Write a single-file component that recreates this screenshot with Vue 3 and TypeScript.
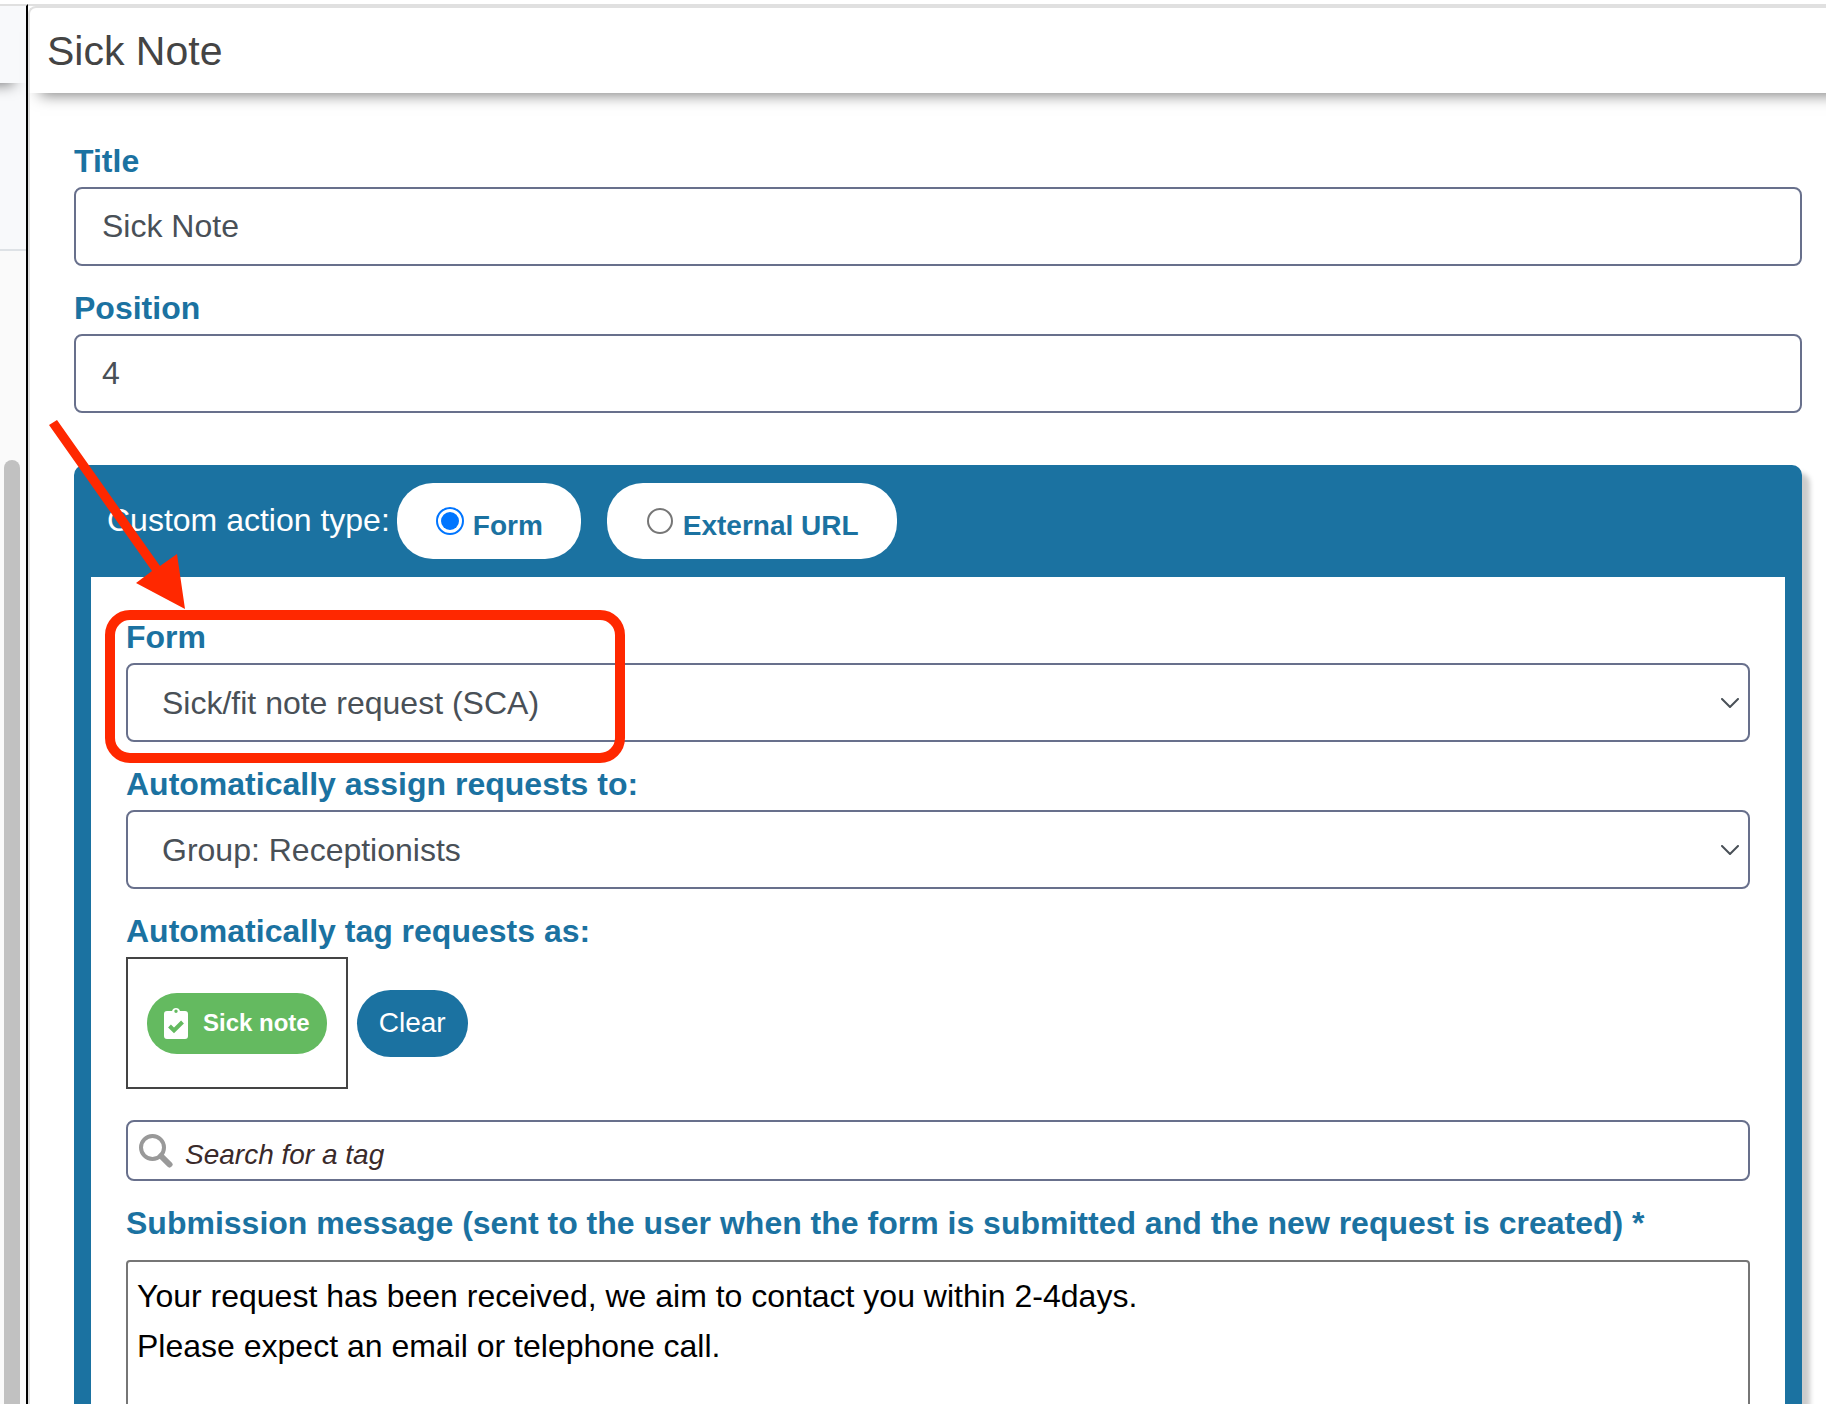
<script setup lang="ts">
import { ref } from 'vue'

const title = ref('Sick Note')
const position = ref('4')
const actionType = ref<'form' | 'url'>('form')
const form = ref('sca')
const assignee = ref('receptionists')
const tagSearch = ref('')
const message = ref(
  'Your request has been received, we aim to contact you within 2-4days.\nPlease expect an email or telephone call.'
)
</script>

<template>
  <div class="page">
    <aside class="side">
      <div class="side-head"></div>
      <div class="side-body"></div>
      <div class="side-list"><div class="thumb"></div></div>
    </aside>

    <main class="sheet">
      <header class="sheet-head"><h1>Sick Note</h1></header>

      <form class="content" @submit.prevent>
        <div class="field">
          <label for="title">Title</label>
          <input id="title" v-model="title" class="control" type="text" />
        </div>
        <div class="field">
          <label for="position">Position</label>
          <input id="position" v-model="position" class="control" type="text" />
        </div>

        <section class="panel">
          <div class="panel-head" role="radiogroup" aria-labelledby="type-label">
            <span id="type-label" class="type-label">Custom action type:</span>
            <label class="pill">
              <input v-model="actionType" type="radio" name="type" value="form" />
              <span>Form</span>
            </label>
            <label class="pill">
              <input v-model="actionType" type="radio" name="type" value="url" />
              <span>External URL</span>
            </label>
          </div>

          <div class="panel-body">
            <div class="field marked">
              <label for="form">Form</label>
              <div class="select">
                <select id="form" v-model="form" class="control">
                  <option value="sca">Sick/fit note request (SCA)</option>
                </select>
                <svg class="chevron" viewBox="0 0 18 10" aria-hidden="true"><path d="M1 1l8 8 8-8" /></svg>
              </div>
              <div class="highlight"></div>
              <svg class="arrow" viewBox="0 0 138 190" aria-hidden="true">
                <path d="M9 0L112 146L129 134L137 189L88 163L104 151L1 5Z" />
              </svg>
            </div>

            <div class="field">
              <label for="assignee">Automatically assign requests to:</label>
              <div class="select">
                <select id="assignee" v-model="assignee" class="control">
                  <option value="receptionists">Group: Receptionists</option>
                </select>
                <svg class="chevron" viewBox="0 0 18 10" aria-hidden="true"><path d="M1 1l8 8 8-8" /></svg>
              </div>
            </div>

            <div class="field">
              <label for="tag-search">Automatically tag requests as:</label>
              <div class="tag-row">
                <div class="tag-box">
                  <span class="tag">
                    <svg class="clipboard" viewBox="0 0 24 32" aria-hidden="true">
                      <path
                        fill-rule="evenodd"
                        d="M3 4H8A4.200 4.200 0 0 1 16 4H21A3 3 0 0 1 24 7V29A3 3 0 0 1 21 32H3A3 3 0 0 1 0 29V7A3 3 0 0 1 3 4ZM12 2.500A1.700 1.700 0 1 0 12 5.900A1.700 1.700 0 1 0 12 2.500Z"
                      />
                      <path class="tick" d="M5.500 19l4.500 4.500 8.500-8.500" />
                    </svg>
                    Sick note
                  </span>
                </div>
                <button type="button" class="clear">Clear</button>
              </div>
              <div class="search">
                <svg class="lens" viewBox="0 0 34 34" aria-hidden="true">
                  <circle cx="13.500" cy="13.500" r="11.500" />
                  <path d="M22 22l8.500 8.500" />
                </svg>
                <input id="tag-search" v-model="tagSearch" type="text" placeholder="Search for a tag" />
              </div>
            </div>

            <div class="field message">
              <label for="message"
                >Submission message (sent to the user when the form is submitted and the new request is created) *</label
              >
              <textarea id="message" v-model="message" rows="6"></textarea>
            </div>
          </div>
        </section>
      </form>
    </main>
  </div>
</template>

<style>
body {
  margin: 0;
  background: #fff;
}
</style>

<style scoped>
* {
  box-sizing: border-box;
}
.page {
  display: flex;
  height: 100vh;
  overflow: hidden;
  padding-top: 4px;
  font-family: 'Liberation Sans', Arial, sans-serif;
  font-size: 32px;
  line-height: 36px;
  color: #495057;
}
.side {
  display: flex;
  flex-direction: column;
  flex: none;
  width: 28px;
  border-top: 2px solid #e0e0e0;
  border-right: 2px solid #000;
  background: #f8f9fb;
  overflow: hidden;
}
.side-head {
  height: 77px;
  margin-left: -40px;
  box-shadow: 0 14px 14px -12px rgba(0, 0, 0, 0.5);
}
.side-body {
  height: 168px;
  border-bottom: 2px solid #dee2e6;
}
.side-list {
  flex: 1;
  padding: 209px 6px 0 4px;
  display: flex;
  background: #fafafa;
}
.thumb {
  flex: 1;
  border-radius: 8px 8px 0 0;
  background: #c1c1c1;
}
.sheet {
  flex: 1;
  min-width: 0;
  border-top: 2px solid #e0e0e0;
  background: #fff;
}
.sheet-head {
  display: flex;
  align-items: center;
  height: 87px;
  margin-right: -40px;
  padding: 0 17px;
  border: solid #e0e0e0;
  border-width: 2px 0 0 2px;
  border-radius: 8px 0 0 0;
  box-shadow: 0 14px 14px -12px rgba(0, 0, 0, 0.5);
}
h1 {
  margin: 0;
  font-size: 41px;
  font-weight: 400;
  line-height: 48px;
  color: #444;
}
.content {
  padding: 50px 24px 0 44px;
  border-left: 2px solid #ddd;
}
.field {
  display: flex;
  flex-direction: column;
  gap: 8px;
  margin-bottom: 24px;
}
.field > label {
  font-weight: 700;
  color: #1b72a1;
}
.control {
  width: 100%;
  height: 79px;
  padding: 0 26px;
  border: 2px solid #68708c;
  border-radius: 8px;
  background: #fff;
  font: inherit;
  color: #495057;
}
.select {
  display: grid;
  align-items: center;
}
.select > * {
  grid-area: 1 / 1;
}
.select .control {
  padding: 0 34px;
  appearance: none;
}
.chevron {
  justify-self: end;
  width: 18px;
  height: 10px;
  margin-right: 11px;
  fill: none;
  stroke: #495057;
  stroke-width: 2;
  stroke-linecap: round;
  stroke-linejoin: round;
  pointer-events: none;
}
.panel {
  margin-top: 52px;
  border-radius: 10px;
  background: #1b72a1;
  box-shadow: 8px 8px 5px #ccc;
}
.panel-head {
  display: flex;
  padding: 18px 33px;
}
.type-label {
  margin-right: 7px;
  line-height: 74px;
  color: #fff;
}
.pill {
  display: flex;
  align-items: center;
  gap: 10px;
  height: 76px;
  margin-right: 26px;
  padding: 0 38px 0 40px;
  border-radius: 36px;
  background: #fff;
  font-size: 28px;
  font-weight: 700;
  color: #1b72a1;
}
.pill input {
  display: grid;
  place-items: center;
  width: 26px;
  height: 26px;
  margin: 0;
  border: 2px solid #767676;
  border-radius: 50%;
  background: #fff;
  appearance: none;
}
.pill input:checked {
  width: 28px;
  height: 28px;
  margin: 0 -1px;
  border-color: #0075ff;
}
.pill input:checked::before {
  content: '';
  width: 18px;
  height: 18px;
  border-radius: 50%;
  background: #0075ff;
}
.pill span {
  padding-top: 10px;
}
.panel-body {
  margin: 0 17px;
  padding: 42px 35px 40px;
  background: #fff;
}
.marked {
  position: relative;
}
.highlight {
  position: absolute;
  top: -9px;
  left: -21px;
  width: 520px;
  height: 153px;
  border: 10px solid #ff2800;
  border-radius: 25px;
  pointer-events: none;
}
.arrow {
  position: absolute;
  top: -199px;
  left: -78px;
  width: 138px;
  height: 190px;
  fill: #ff2800;
  pointer-events: none;
}
.tag-row {
  display: flex;
  align-items: center;
  gap: 9px;
  margin-bottom: 23px;
}
.tag-box {
  display: flex;
  align-items: center;
  height: 132px;
  padding: 0 19px;
  border: 2px solid #444;
}
.tag {
  display: flex;
  align-items: center;
  gap: 15px;
  height: 61px;
  padding: 0 17px;
  border-radius: 30px;
  background: #64ba60;
  font-size: 24px;
  font-weight: 700;
  color: #fff;
}
.clipboard {
  width: 24px;
  height: 32px;
  fill: #fff;
}
.tick {
  fill: none;
  stroke: #64ba60;
  stroke-width: 4;
}
.clear {
  height: 67px;
  padding: 0 22px;
  border: 0;
  border-radius: 34px;
  background: #1b72a1;
  font: inherit;
  font-size: 28px;
  color: #fff;
}
.search {
  display: flex;
  align-items: center;
  gap: 12px;
  height: 61px;
  padding: 0 11px;
  border: 2px solid #68708c;
  border-radius: 8px;
}
.lens {
  flex: none;
  width: 34px;
  height: 34px;
  fill: none;
  stroke: #999;
  stroke-width: 4;
}
.lens path {
  stroke-width: 6;
  stroke-linecap: round;
}
.search input {
  flex: 1;
  min-width: 0;
  padding: 8px 0 0;
  border: 0;
  outline: 0;
  background: none;
  font: inherit;
  font-size: 28px;
  color: #3a2a2a;
}
.search input::placeholder {
  font-style: italic;
  color: #3a2a2a;
  opacity: 1;
}
.message {
  gap: 19px;
}
textarea {
  width: 100%;
  padding: 9px;
  border: 2px solid #767676;
  border-radius: 4px;
  font: inherit;
  line-height: 50px;
  color: #000;
  resize: none;
}
</style>
